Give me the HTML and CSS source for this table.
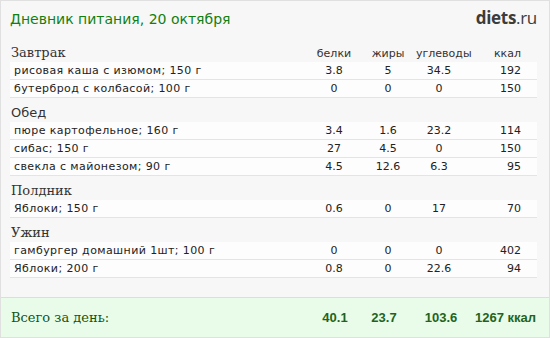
FILE: index.html
```html
<!DOCTYPE html>
<html lang="ru">
<head>
<meta charset="utf-8">
<link rel="stylesheet" href="styles.css">
</head>
<body>
<div class="card">
  <div class="top">
    <div class="title">Дневник питания, 20 октября</div>
    <div class="logo"><b>diets</b>.ru</div>
  </div>

  <div class="section">
    <div class="grid head">
      <div class="meal">Завтрак</div>
      <div class="c lbl">белки</div>
      <div class="c lbl">жиры</div>
      <div class="c lbl">углеводы</div>
      <div class="r lbl">ккал</div>
    </div>
    <div class="grid row"><div class="name">рисовая каша с изюмом; 150 г</div><div class="c">3.8</div><div class="c">5</div><div class="c">34.5</div><div class="r">192</div></div>
    <div class="grid row"><div class="name">бутерброд с колбасой; 100 г</div><div class="c">0</div><div class="c">0</div><div class="c">0</div><div class="r">150</div></div>
  </div>

  <div class="section">
    <div class="grid head"><div class="meal sans">Обед</div></div>
    <div class="grid row"><div class="name">пюре картофельное; 160 г</div><div class="c">3.4</div><div class="c">1.6</div><div class="c">23.2</div><div class="r">114</div></div>
    <div class="grid row"><div class="name">сибас; 150 г</div><div class="c">27</div><div class="c">4.5</div><div class="c">0</div><div class="r">150</div></div>
    <div class="grid row"><div class="name">свекла с майонезом; 90 г</div><div class="c">4.5</div><div class="c">12.6</div><div class="c">6.3</div><div class="r">95</div></div>
  </div>

  <div class="section">
    <div class="grid head"><div class="meal">Полдник</div></div>
    <div class="grid row"><div class="name">Яблоки; 150 г</div><div class="c">0.6</div><div class="c">0</div><div class="c">17</div><div class="r">70</div></div>
  </div>

  <div class="section">
    <div class="grid head"><div class="meal">Ужин</div></div>
    <div class="grid row"><div class="name">гамбургер домашний 1шт; 100 г</div><div class="c">0</div><div class="c">0</div><div class="c">0</div><div class="r">402</div></div>
    <div class="grid row"><div class="name">Яблоки; 200 г</div><div class="c">0.8</div><div class="c">0</div><div class="c">22.6</div><div class="r">94</div></div>
  </div>

  <div class="total">
    <div class="tlabel">Всего за день:</div>
    <div class="c">40.1</div>
    <div class="c">23.7</div>
    <div class="c">103.6</div>
    <div class="r">1267 ккал</div>
  </div>
</div>
</body>
</html>
```

FILE: styles.css
```css
html, body {
  margin: 0;
  padding: 0;
  background: #ffffff;
}
.card {
  box-sizing: border-box;
  width: 550px;
  height: 338px;
  border: 1px solid #e0e0e0;
  background: #f7f7f7;
  font-family: "DejaVu Sans", Verdana, sans-serif;
  display: flex;
  flex-direction: column;
}
.top {
  display: flex;
  justify-content: space-between;
  align-items: baseline;
  padding: 5px 12px 0 9px;
  height: 37px;
  box-sizing: border-box;
}
.title {
  color: #118011;
  font-size: 14px;
  letter-spacing: 0;
}
.logo {
  font-family: "Open Sans", sans-serif;
  font-size: 17px;
  color: #3c3c3c;
  letter-spacing: -0.3px;
}
.logo b {
  font-weight: 700;
}
.section {
  margin: 0 12px 0 9px;
}
.grid {
  display: grid;
  grid-template-columns: 1fr 52px 56px 46px 59px;
  padding: 0 16px 0 4px;
  align-items: baseline;
}
.head {
  height: 24px;
  padding-left: 1px;
  align-content: end;
}
.meal {
  font-family: "DejaVu Serif", serif;
  font-size: 13px;
  color: #333;
  line-height: 19px;
}
.meal.sans {
  font-family: "DejaVu Sans", sans-serif;
}
.lbl {
  font-size: 11px;
  color: #333;
  letter-spacing: 0;
}
.row {
  height: 17px;
  line-height: 17px;
  background: #fdfdfd;
  border-bottom: 1px solid #e4e4e4;
  font-size: 11px;
  color: #222;
}
.row .name {
  letter-spacing: 0.4px;
}
.c {
  text-align: center;
}
.r {
  text-align: right;
}
.total {
  margin-top: auto;
  height: 39px;
  border-top: 1px solid #dddddd;
  background: #e9fce9;
  display: grid;
  grid-template-columns: 1fr 50px 48px 66px 62px;
  align-items: center;
  padding: 0 13px 0 10px;
  font-family: "Liberation Sans", Arial, sans-serif;
  font-weight: 700;
  font-size: 13px;
  color: #1e641e;
}
.tlabel {
  font-family: "DejaVu Serif", serif;
  font-weight: 400;
  font-size: 13px;
  color: #145414;
}
```
